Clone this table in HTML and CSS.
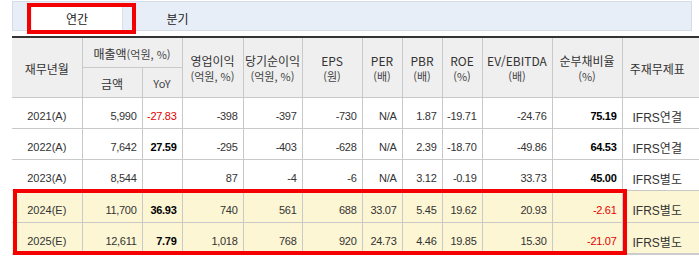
FILE: index.html
```html
<!DOCTYPE html>
<html lang="ko">
<head>
<meta charset="utf-8">
<link rel="stylesheet" href="styles.css">
</head>
<body>
<div class="page">
  <div class="tabs">
    <div class="tab active">연간</div>
    <div class="tab">분기</div>
  </div>
  <table class="fin">
    <colgroup>
      <col class="w70"><col class="w60"><col class="w40"><col class="w61"><col class="w59"><col class="w60">
      <col class="w40"><col class="w40"><col class="w40"><col class="w70"><col class="w70"><col class="w80">
    </colgroup>
    <thead>
      <tr class="hr">
        <th rowspan="2" class="first">재무년월</th>
        <th colspan="2">매출액<span class="sm">(억원, %)</span></th>
        <th rowspan="2">영업이익<br><span class="sm">(억원, %)</span></th>
        <th rowspan="2">당기순이익<br><span class="sm">(억원, %)</span></th>
        <th rowspan="2">EPS<br><span class="sm">(원)</span></th>
        <th rowspan="2">PER<br><span class="sm">(배)</span></th>
        <th rowspan="2">PBR<br><span class="sm">(배)</span></th>
        <th rowspan="2">ROE<br><span class="sm">(%)</span></th>
        <th rowspan="2">EV/EBITDA<br><span class="sm">(배)</span></th>
        <th rowspan="2">순부채비율<br><span class="sm">(%)</span></th>
        <th rowspan="2" class="last">주재무제표</th>
      </tr>
      <tr class="hr">
        <th>금액</th>
        <th class="sm">YoY</th>
      </tr>
    </thead>
    <tbody>
      <tr>
        <td class="first">2021(A)</td><td>5,990</td><td class="r">-27.83</td><td>-398</td><td>-397</td><td>-730</td>
        <td>N/A</td><td>1.87</td><td>-19.71</td><td>-24.76</td><td class="b">75.19</td><td class="last">IFRS연결</td>
      </tr>
      <tr>
        <td class="first">2022(A)</td><td>7,642</td><td class="b">27.59</td><td>-295</td><td>-403</td><td>-628</td>
        <td>N/A</td><td>2.39</td><td>-18.70</td><td>-49.86</td><td class="b">64.53</td><td class="last">IFRS연결</td>
      </tr>
      <tr>
        <td class="first">2023(A)</td><td>8,544</td><td></td><td>87</td><td>-4</td><td>-6</td>
        <td>N/A</td><td>3.12</td><td>-0.19</td><td>33.73</td><td class="b">45.00</td><td class="last">IFRS별도</td>
      </tr>
      <tr class="est">
        <td class="first">2024(E)</td><td>11,700</td><td class="b">36.93</td><td>740</td><td>561</td><td>688</td>
        <td>33.07</td><td>5.45</td><td>19.62</td><td>20.93</td><td class="r">-2.61</td><td class="last">IFRS별도</td>
      </tr>
      <tr class="est">
        <td class="first">2025(E)</td><td>12,611</td><td class="b">7.79</td><td>1,018</td><td>768</td><td>920</td>
        <td>24.73</td><td>4.46</td><td>19.85</td><td>15.30</td><td class="r">-21.07</td><td class="last">IFRS별도</td>
      </tr>
    </tbody>
  </table>
  <div class="mark mark-tab"></div>
  <div class="mark mark-rows"></div>
</div>
</body>
</html>
```
FILE: styles.css
```css
html, body {
  margin: 0;
  background: #fff;
}
body {
  font-family: "Liberation Sans", "Noto Sans CJK KR", sans-serif;
  color: #333;
}
.page {
  position: relative;
  width: 687px;
  height: 259px;
  padding: 1px 0 0 12px;
  overflow: hidden;
}
.tabs {
  display: flex;
  gap: 9px;
  width: 680px;
  height: 30px;
  box-sizing: border-box;
  padding: 4px 0 0 19px;
  background: #e8eef8;
  border: 1px solid #d5dbe7;
}
.tab {
  width: 91px;
  display: flex;
  align-items: center;
  justify-content: center;
  font-family: "Noto Sans CJK KR", sans-serif;
  font-size: 12px;
  color: #222;
}
.tab.active {
  background: #fff;
  border-right: 1px solid #d9dee8;
  box-sizing: border-box;
}
.fin {
  margin-top: 5px;
  width: 690px;
  table-layout: fixed;
  border-collapse: collapse;
  border-top: 2px solid #333;
  border-bottom: 2px solid #cdcdcd;
}
.w70 { width: 70px; }
.w60 { width: 60px; }
.w40 { width: 40px; }
.w61 { width: 61px; }
.w59 { width: 59px; }
.w80 { width: 80px; }
.fin th, .fin td {
  border: 1px solid #c9c9c9;
  padding: 0;
  overflow: hidden;
  white-space: nowrap;
}
.fin th {
  background: #efefef;
  font-weight: normal;
  font-size: 12px;
  line-height: 15px;
  color: #333;
  padding-top: 3px;
  font-family: "Noto Sans CJK KR", "Liberation Sans", sans-serif;
}
.fin th .sm, .fin th.sm {
  font-size: 11px;
  color: #444;
}
.hr {
  height: 30px;
}
.fin tbody tr {
  height: 31px;
}
.fin tbody tr.est {
  height: 32px;
}
.fin td {
  font-size: 11px;
  letter-spacing: -0.3px;
  text-align: right;
  padding-right: 5px;
  padding-top: 7px;
  color: #333;
}
.fin .first {
  border-left: none;
  text-align: center;
  padding-right: 0;
  letter-spacing: 0;
}
.fin .last {
  border-right: none;
  text-align: center;
  padding-right: 10px;
}
.fin td.last {
  font-size: 12px;
  letter-spacing: 0;
  font-family: "Liberation Sans", "Noto Sans CJK KR", sans-serif;
}
.fin td.b {
  font-weight: bold;
  color: #000;
}
.fin td.r {
  color: #e60000;
}
.fin tr.est td {
  background: #fcf6d4;
}
.mark {
  position: absolute;
  box-sizing: border-box;
  border: 4px solid #f40000;
  pointer-events: none;
}
.mark-tab {
  left: 27px;
  top: 3px;
  width: 109px;
  height: 31px;
}
.mark-rows {
  left: 13px;
  top: 189px;
  width: 614px;
  height: 66px;
}
```
